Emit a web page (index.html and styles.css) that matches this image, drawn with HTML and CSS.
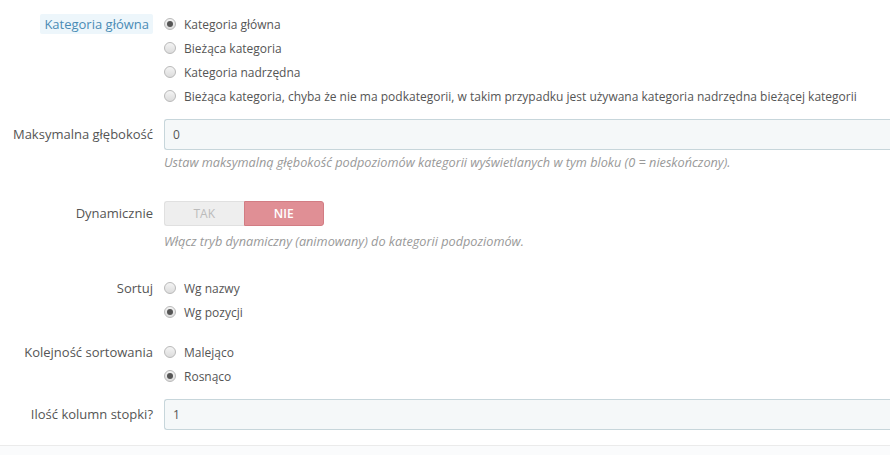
FILE: index.html
```html
<!DOCTYPE html>
<html lang="pl">
<head>
<meta charset="utf-8">
<link rel="stylesheet" href="styles.css">
</head>
<body>
<div class="form">
  <div class="group g-radios">
    <div class="label"><span class="hl">Kategoria główna</span></div>
    <div class="ctrl">
      <div class="radio"><span class="dot on"></span>Kategoria główna</div>
      <div class="radio"><span class="dot"></span>Bieżąca kategoria</div>
      <div class="radio"><span class="dot"></span>Kategoria nadrzędna</div>
      <div class="radio"><span class="dot"></span>Bieżąca kategoria, chyba że nie ma podkategorii, w takim przypadku jest używana kategoria nadrzędna bieżącej kategorii</div>
    </div>
  </div>
  <div class="group g-depth">
    <div class="label mid">Maksymalna głębokość</div>
    <div class="ctrl">
      <div class="input">0</div>
      <div class="help">Ustaw maksymalną głębokość podpoziomów kategorii wyświetlanych w tym bloku (0 = nieskończony).</div>
    </div>
  </div>
  <div class="group g-dyn">
    <div class="label mid">Dynamicznie</div>
    <div class="ctrl">
      <div class="switch"><span class="tak">TAK</span><span class="nie">NIE</span></div>
      <div class="help">Włącz tryb dynamiczny (animowany) do kategorii podpoziomów.</div>
    </div>
  </div>
  <div class="group g-sort">
    <div class="label">Sortuj</div>
    <div class="ctrl">
      <div class="radio"><span class="dot"></span>Wg nazwy</div>
      <div class="radio"><span class="dot on"></span>Wg pozycji</div>
    </div>
  </div>
  <div class="group g-order">
    <div class="label">Kolejność sortowania</div>
    <div class="ctrl">
      <div class="radio"><span class="dot"></span>Malejąco</div>
      <div class="radio"><span class="dot on"></span>Rosnąco</div>
    </div>
  </div>
  <div class="group g-cols">
    <div class="label mid">Ilość kolumn stopki?</div>
    <div class="ctrl">
      <div class="input">1</div>
    </div>
  </div>
</div>
<div class="footer"></div>
</body>
</html>
```

FILE: styles.css
```css
html, body {
  margin: 0;
  padding: 0;
  background: #fff;
  overflow: hidden;
}
body {
  width: 890px;
  height: 455px;
  font-family: "Open Sans", "Liberation Sans", sans-serif;
  font-size: 12px;
  color: #555;
}
.form {
  padding-top: 12px;
  height: 445px;
  box-sizing: border-box;
}
.group {
  display: grid;
  grid-template-columns: 153px 1fr;
  column-gap: 11px;
}
.label {
  text-align: right;
  font-size: 13px;
  line-height: 24px;
  color: #555;
  white-space: nowrap;
}
.label.mid {
  line-height: 31px;
}
.hl {
  display: inline-block;
  background: #edf6fb;
  color: #4a8bb5;
  line-height: 20px;
  padding: 0 4px;
  margin-top: 2px;
  border-radius: 2px;
  vertical-align: top;
}
.ctrl {
  min-width: 0;
}
.radio {
  display: flex;
  align-items: center;
  height: 24px;
  white-space: nowrap;
  color: #555;
}
.dot {
  width: 12px;
  height: 12px;
  border-radius: 50%;
  box-sizing: border-box;
  border: 1px solid #b9b9b9;
  background: linear-gradient(#f4f4f4, #dcdcdc);
  margin-right: 8px;
  flex: none;
  position: relative;
}
.dot.on::after {
  content: "";
  position: absolute;
  left: 2px;
  top: 2px;
  width: 6px;
  height: 6px;
  border-radius: 50%;
  background: #555;
}
.input {
  height: 31px;
  box-sizing: border-box;
  border: 1px solid #c7d6db;
  border-right: none;
  border-radius: 3px 0 0 3px;
  background: #f5f8f9;
  line-height: 29px;
  padding-left: 8px;
  color: #555;
  width: 740px;
}
.help {
  font-style: italic;
  font-size: 12.7px;
  color: #999;
  line-height: 16px;
  margin-top: 4px;
  white-space: nowrap;
}
.g-depth {
  margin-top: 11px;
}
.g-dyn {
  margin-top: 31px;
}
.g-dyn .label.mid {
  line-height: 25px;
}
.switch {
  display: flex;
  width: 160px;
  height: 25px;
}
.switch span {
  flex: 1;
  display: flex;
  align-items: center;
  justify-content: center;
  box-sizing: border-box;
}
.tak {
  background: #eee;
  color: #bbb;
  border: 1px solid #e0e0e0;
  border-right: none;
  border-radius: 3px 0 0 3px;
}
.nie {
  background: #e08f95;
  color: #fff;
  font-weight: 600;
  border: 1px solid #d27c83;
  border-radius: 0 3px 3px 0;
}
.g-dyn .help {
  margin-top: 7px;
}
.g-sort {
  margin-top: 27px;
}
.g-order {
  margin-top: 16px;
}
.g-cols {
  margin-top: 11px;
}
.footer {
  height: 10px;
  border-top: 1px solid #ebebeb;
  background: #fafbfc;
}
```
